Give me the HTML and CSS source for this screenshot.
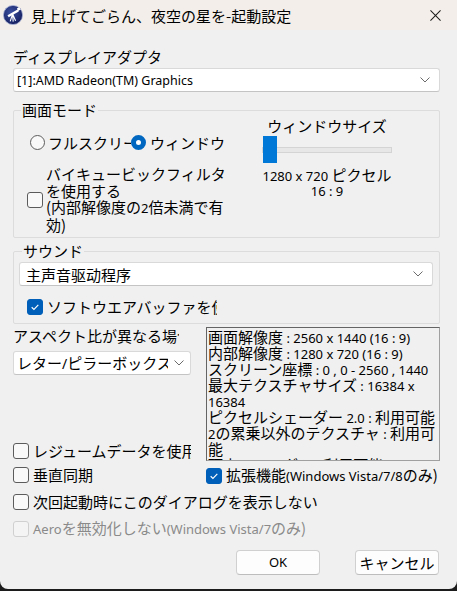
FILE: index.html
```html
<!doctype html>
<html lang="ja">
  <head>
    <meta charset="utf-8" />
    <title>起動設定</title>
    <link rel="stylesheet" href="styles.css">
  </head>
  <body>
    <div class="window">
      <div class="titlebar">
        <svg class="app-icon" viewBox="0 0 20 20">
          <defs>
            <radialGradient id="sky" cx="0.4" cy="0.35" r="0.7">
              <stop offset="0" stop-color="#3b4fa0" />
              <stop offset="1" stop-color="#141d5c" />
            </radialGradient>
          </defs>
          <circle cx="10" cy="10" r="9.6" fill="url(#sky)" stroke="#aab3d6" stroke-width="0.8" />
          <g fill="#fff">
            <path d="M4.5 10.2 L14.6 4.4 L15.8 6.4 L5.7 12.2 Z" />
            <path d="M13.8 3.6 L16.2 2.2 L17.6 4.6 L15.2 6 Z" />
          </g>
          <g stroke="#fff" stroke-width="1.1" fill="none">
            <path d="M9.6 9 L7.2 16.4 M9.6 9 L10.2 16.6 M9.6 9 L12.6 15.8" />
          </g>
        </svg>
        <span class="title">見上げてごらん、夜空の星を-起動設定</span>
        <svg class="close" viewBox="0 0 12 12">
          <path d="M0.5 0.5 L11.5 11.5 M11.5 0.5 L0.5 11.5" stroke="#1a1a1a" stroke-width="1.1" />
        </svg>
      </div>

      <div class="content">
        <div class="label">ディスプレイアダプタ</div>
        <div class="combo adapter">
          <span class="combo-text en">[1]:AMD Radeon(TM) Graphics</span>
          <svg class="chevron" viewBox="0 0 10 6"><path d="M0.5 0.5 L5 5 L9.5 0.5" /></svg>
        </div>

        <fieldset class="group mode">
          <legend>画面モード</legend>
          <div class="mode-body">
            <div class="mode-left">
              <div class="radios">
                <div class="radio full">
                  <span class="dot"></span>
                  <span class="radio-text">フルスクリーン</span>
                </div>
                <div class="radio on">
                  <span class="dot"></span>
                  <span class="radio-text">ウィンドウ</span>
                </div>
              </div>
              <div class="check filter">
                <span class="box"></span>
                <span class="check-text">バイキュービックフィルタ<br>を使用する<br>(内部解像度の<span class="en">2</span>倍未満で有<br>効)</span>
              </div>
            </div>
            <div class="mode-right">
              <div class="size-title">ウィンドウサイズ</div>
              <div class="slider">
                <div class="track"></div>
                <div class="thumb"></div>
              </div>
              <div class="size-value"><span class="en">1280 x 720 </span>ピクセル</div>
              <div class="ratio en">16 : 9</div>
            </div>
          </div>
        </fieldset>

        <fieldset class="group sound">
          <legend>サウンド</legend>
          <div class="combo device">
            <span class="combo-text">主声音驱动程序</span>
            <svg class="chevron" viewBox="0 0 10 6"><path d="M0.5 0.5 L5 5 L9.5 0.5" /></svg>
          </div>
          <div class="check buffer">
            <span class="box on"><svg viewBox="0 0 16 16"><path d="M4.2 8.3 L6.8 10.8 L11.8 5.6" /></svg></span>
            <span class="check-text clip">ソフトウエアバッファを使用する</span>
          </div>
        </fieldset>

        <div class="lower">
          <div class="lower-left">
            <div class="aspect-label">アスペクト比が異なる場合</div>
            <div class="combo aspect">
              <span class="combo-text">レター<span class="en">/</span>ピラーボックス</span>
              <svg class="chevron" viewBox="0 0 10 6"><path d="M0.5 0.5 L5 5 L9.5 0.5" /></svg>
            </div>
            <div class="check resume">
              <span class="box"></span>
              <span class="check-text clip">レジュームデータを使用する</span>
            </div>
          </div>
          <div class="info">
            <div class="line">画面解像度<span class="en"> : 2560 x 1440 (16 : 9)</span></div>
            <div class="line">内部解像度<span class="en"> : 1280 x 720 (16 : 9)</span></div>
            <div class="line">スクリーン座標<span class="en"> : 0 , 0 - 2560 , 1440</span></div>
            <div class="line">最大テクスチャサイズ<span class="en"> : 16384 x</span></div>
            <div class="line"><span class="en">16384</span></div>
            <div class="line">ピクセルシェーダー<span class="en"> 2.0 : </span>利用可能</div>
            <div class="line"><span class="en">2</span>の累乗以外のテクスチャ<span class="en"> : </span>利用可</div>
            <div class="line">能</div>
            <div class="line">頂点シェーダー<span class="en"> : </span>利用可能</div>
          </div>
        </div>

        <div class="row">
          <div class="check">
            <span class="box"></span>
            <span class="check-text">垂直同期</span>
          </div>
          <div class="check">
            <span class="box on"><svg viewBox="0 0 16 16"><path d="M4.2 8.3 L6.8 10.8 L11.8 5.6" /></svg></span>
            <span class="check-text">拡張機能<span class="en">(Windows Vista/7/8</span>のみ)</span>
          </div>
        </div>

        <div class="check single">
          <span class="box"></span>
          <span class="check-text">次回起動時にこのダイアログを表示しない</span>
        </div>

        <div class="check single disabled">
          <span class="box"></span>
          <span class="check-text"><span class="en">Aero</span>を無効化しない<span class="en">(Windows Vista/7</span>のみ)</span>
        </div>

        <div class="buttons">
          <div class="button en">OK</div>
          <div class="button">キャンセル</div>
        </div>
      </div>
    </div>
  </body>
</html>
```

FILE: styles.css
```css
body {
  margin: 0;
  padding: 0;
  background-color: #1c1c1c;
  font-family: "Noto Sans CJK JP", sans-serif;
  font-size: 15px;
  color: #000;
}

.en {
  font-family: "Noto Sans", "Noto Sans CJK JP", sans-serif;
  font-size: 13px;
}

.window {
  width: 457px;
  height: 589px;
  background-color: #f0f0f0;
  border-radius: 0 0 8px 8px;
  overflow: hidden;
}

/* title bar */
.titlebar {
  height: 30px;
  background-color: #f3eee9;
  display: flex;
  align-items: center;
  padding-left: 3px;
}

.app-icon {
  width: 20px;
  height: 20px;
  margin-right: 8px;
}

.title {
  flex: 1;
  line-height: 17px;
}

.close {
  width: 11px;
  height: 11px;
  margin-right: 16px;
}

.content {
  padding: 0 17px 0 13px;
}

.label {
  margin-top: 18px;
  line-height: 17px;
}

/* combo boxes */
.combo {
  box-sizing: border-box;
  height: 24px;
  background-color: #fff;
  border: 1px solid #d9d9d9;
  border-bottom-color: #c4c4c4;
  border-radius: 3px;
  display: flex;
  align-items: center;
  padding: 0 9px 0 3px;
}

.combo-text {
  flex: 1;
  white-space: nowrap;
  overflow: hidden;
  line-height: 17px;
}

.chevron {
  width: 10px;
  height: 6px;
  flex: none;
  margin-left: 6px;
}

.chevron path {
  fill: none;
  stroke: #6b6b6b;
  stroke-width: 1;
}

.adapter {
  margin-top: 3px;
}

.adapter .combo-text {
  font-size: 12.5px;
}

/* group boxes */
.group {
  margin: 0;
  border: 1px solid #dcdcdc;
  border-radius: 2px;
}

.group legend {
  padding: 0 1px;
  line-height: 16px;
}

.mode {
  margin-top: 10px;
  padding: 0 0 4px 16px;
}

.mode legend {
  margin-left: -9px;
}

.mode-body {
  display: grid;
  grid-template-columns: 232px 130px;
}

.radios {
  display: flex;
  margin-top: 16px;
  height: 17px;
}

.radio {
  display: flex;
  align-items: center;
  white-space: nowrap;
  overflow: hidden;
}

.radio.full {
  width: 101px;
}

.dot {
  width: 15px;
  height: 15px;
  box-sizing: border-box;
  border: 1px solid #5c5c5c;
  border-radius: 50%;
  background-color: #f9f9f9;
  flex: none;
  margin-right: 3px;
}

.radio.on .dot {
  border: 5px solid #0067c0;
  background-color: #fff;
  margin-right: 4px;
}

/* check boxes */
.check {
  display: flex;
  align-items: center;
}

.box {
  width: 16px;
  height: 16px;
  box-sizing: border-box;
  border: 1px solid #5c5c5c;
  border-radius: 3px;
  background-color: #f9f9f9;
  flex: none;
  margin-right: 4px;
}

.box.on {
  background-color: #005fb8;
  border-color: #005fb8;
}

.box svg {
  display: block;
  width: 14px;
  height: 14px;
}

.box svg path {
  fill: none;
  stroke: #fff;
  stroke-width: 1.3;
}

.check-text {
  line-height: 17px;
  white-space: nowrap;
}

.check-text.clip {
  overflow: hidden;
}

.filter {
  margin-top: 15px;
  margin-left: -3px;
}

.filter .check-text {
  line-height: 16.5px;
  margin-left: -1px;
}

.mode-right {
  text-align: center;
}

.size-title {
  line-height: 17px;
  margin-top: -1px;
}

.slider {
  position: relative;
  height: 29px;
}

.track {
  position: absolute;
  left: 0;
  right: 0;
  top: 13px;
  height: 4px;
  background-color: #e7e7e7;
  border: 1px solid #d4d4d4;
}

.thumb {
  position: absolute;
  left: 1px;
  top: 2px;
  width: 14px;
  height: 27px;
  background-color: #0078d7;
}

.size-value {
  line-height: 18px;
  margin-top: 3px;
}

.ratio {
  line-height: 13px;
}

.sound {
  margin-top: 5px;
  padding: 0 6px 8px 5px;
}

.sound legend {
  margin-left: 3px;
}

.device {
  margin-top: 3px;
  height: 24px;
}

.device .combo-text {
  padding-left: 3px;
}

.buffer {
  margin-top: 12px;
  margin-left: 8px;
}

.buffer .check-text {
  width: 170px;
}

/* aspect and info area */
.lower {
  display: grid;
  grid-template-columns: 178px 234px;
  column-gap: 15px;
  margin-top: 3px;
}

.lower-left {
  display: flex;
  flex-direction: column;
}

.aspect-label {
  line-height: 17px;
  white-space: nowrap;
  overflow: hidden;
  width: 166px;
}

.aspect {
  margin-top: 7px;
  padding-right: 6px;
}

.aspect .combo-text .en {
  font-size: 14px;
}

.resume {
  margin-top: auto;
  margin-bottom: 2px;
  height: 17px;
}

.resume .check-text {
  width: 162px;
}

.info {
  box-sizing: border-box;
  height: 134px;
  border: 1px solid #a0a0a0;
  border-top-color: #646464;
  border-left-color: #646464;
  padding: 1px 0 0 1px;
  white-space: nowrap;
  overflow: hidden;
}

.info .line {
  height: 16px;
  line-height: 16px;
}

.row {
  display: grid;
  grid-template-columns: 193px 234px;
  margin-top: 5px;
}

.row .check {
  height: 17px;
}

.row .check + .check {
  margin-top: 1px;
}

.single {
  height: 17px;
  margin-top: 9px;
}

.disabled {
  margin-top: 10px;
  color: #8a8a8a;
}

.disabled .box {
  border-color: #d0d0d0;
  background-color: #f4f4f4;
}

/* dialog buttons */
.buttons {
  display: flex;
  justify-content: flex-end;
  gap: 35px;
  margin-top: 13px;
  padding-right: 1px;
}

.button {
  box-sizing: border-box;
  width: 84px;
  height: 25px;
  background-color: #fdfdfd;
  border: 1px solid #d0d0d0;
  border-bottom-color: #bdbdbd;
  border-radius: 4px;
  display: flex;
  align-items: center;
  justify-content: center;
  line-height: 17px;
}
```
